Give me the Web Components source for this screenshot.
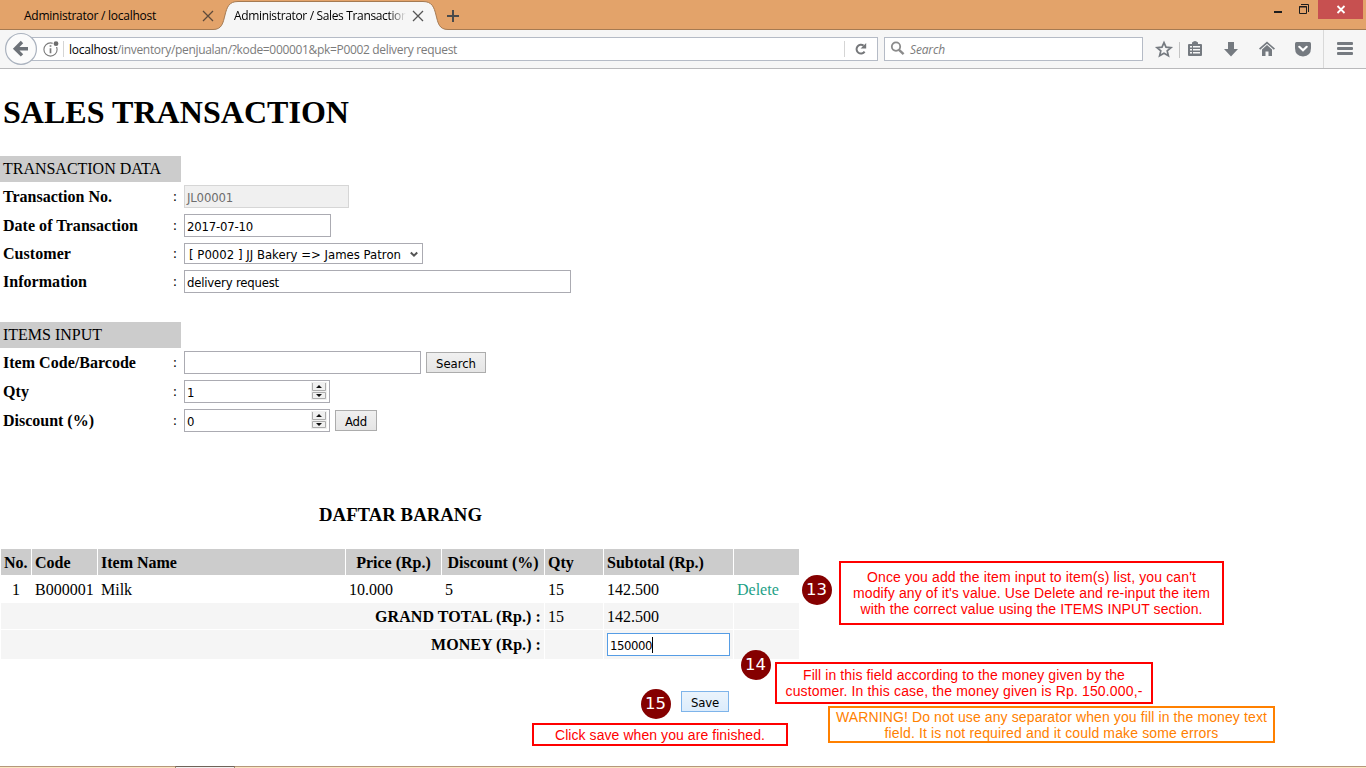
<!DOCTYPE html>
<html lang="en">
<head>
<meta charset="utf-8">
<title>Administrator / Sales Transaction</title>
<style>
html,body{margin:0;padding:0;background:#fff}
body{width:1366px;height:768px;overflow:hidden}
</style>
</head>
<body>
<sales-app></sales-app>
<script>
const define = (name, html, setup) => customElements.define(name, class extends HTMLElement {
  connectedCallback() {
    if (this.shadowRoot) return;
    const t = document.createElement('template');
    t.innerHTML = html;
    this.attachShadow({ mode: 'open' }).appendChild(document.importNode(t.content, true));
    if (setup) setup(this, this.shadowRoot);
  }
});

/* ---------- browser chrome ---------- */
define('tab-strip', `
<style>
:host{display:flex;height:30px;background:#e3a36a;box-shadow:inset 0 -1px #a57a52;font:12px "Open Sans",sans-serif;color:#000;position:relative}
.tab{display:flex;align-items:center;height:30px;box-sizing:border-box;padding:1px 0 0 24px;width:213px}
.tab.on{width:235px;padding-left:21px;position:relative}
.tab.on>svg.bg{position:absolute;left:0;top:0}
.tab.on fit-text,.tab.on svg.x{position:relative}
.title{position:relative;-webkit-mask-image:linear-gradient(90deg,#000 155px,transparent 172px)}
.x{margin-left:auto;display:block}
.plus{margin:10px 0 0 -1px;display:block}
.controls{margin-left:auto;display:flex;margin-right:3px}
</style>
<div class="tab"><fit-text w="132">Administrator / localhost</fit-text>
<svg class="x" style="margin-right:-1px" width="12" height="12"><path d="M1 1L11 11M11 1L1 11" stroke="#5e4a3a" stroke-width="1.3"/></svg></div>
<div class="tab on">
<svg class="bg" width="235" height="30"><path d="M0 30V29.5C9 29.5 10 23 12 15C14 7 16 1.5 25 1.5H210C219 1.5 221 7 223 15C225 23 226 29.5 235 29.5V30Z" fill="#f6f6f6"/><path d="M0 29.5C9 29.5 10 23 12 15C14 7 16 1.5 25 1.5H210C219 1.5 221 7 223 15C225 23 226 29.5 235 29.5" fill="none" stroke="#a57a52"/></svg>
<div class="title"><fit-text w="174">Administrator / Sales Transaction</fit-text></div>
<svg class="x" style="margin-right:24px" width="12" height="12"><path d="M1 1L11 11M11 1L1 11" stroke="#555" stroke-width="1.3"/></svg></div>
<svg class="plus" width="12" height="12"><path d="M6 0V12M0 6H12" stroke="#4b4b4b" stroke-width="2"/></svg>
<div class="controls">
<svg width="89" height="19"><path d="M0 11h8v2H0z" fill="#1d1d1d"/><path d="M25.5 6.500h7v7h-7zM25 7h8" fill="none" stroke="#1d1d1d"/><path d="M27 4.500H34.500V12" fill="none" stroke="#1d1d1d"/><rect x="44" width="45" height="19" fill="#c75050"/><path d="M63.500 6L70.500 13M70.500 6L63.500 13" stroke="#fff" stroke-width="1.8"/></svg>
</div>`);

define('nav-bar', `
<style>
:host{display:flex;height:39px;background:#f6f6f6;border-bottom:1px solid #b9b9bb;box-sizing:border-box;position:relative;font:12px "Open Sans",sans-serif;align-items:center}
.url{margin-left:20px;width:858px;height:24px;box-sizing:border-box;border:1px solid #b5bbc6;background:#fff;display:flex;align-items:center;color:#7b7b7b}
.url b{font-weight:400;color:#000}
.info{margin-left:21px}
.back{position:absolute;left:4px;top:2px}
.bar{width:1px;height:16px;background:#d5d5d5}
.search{margin-left:6px;width:259px;height:24px;box-sizing:border-box;border:1px solid #b5bbc6;background:#fff;display:flex;align-items:center;font-style:italic;color:#7b7b7b}
.icons{margin-left:auto}
svg{display:block}
</style>
<div class="url">
<svg class="info" width="18" height="18" fill="none"><circle cx="8.5" cy="9.5" r="6.6" stroke="#7a7a7a" stroke-width="1.1"/><circle cx="14" cy="3.7" r="3.4" fill="#fff"/><circle cx="14" cy="3.7" r="2.4" fill="#6d6d6d"/><path d="M8.5 5.2v1.6M8.5 8.2v5" stroke="#7a7a7a" stroke-width="1.7"/></svg>
<span class="bar" style="margin:0 5px 0 3px"></span><b><fit-text w="48">localhost</fit-text></b><fit-text w="340">/inventory/penjualan/?kode=000001&amp;pk=P0002 delivery request</fit-text>
<span class="bar" style="margin-left:auto;margin-right:9px"></span>
<svg width="14" height="14" style="margin-right:9px"><path d="M10.6 9.6A4.4 4.4 0 1 1 9.6 3.6" fill="none" stroke="#75777a" stroke-width="2"/><path d="M12.2 1v5.600H6.600z" fill="#75777a"/></svg>
</div>
<svg class="back" width="34" height="34"><circle cx="17" cy="16.9" r="15.4" fill="#fbfbfb" stroke="#aab2be" stroke-width="1.2"/><path d="M18 10L11.300 16.700L18 23.400M11.500 16.700H24" fill="none" stroke="#6d7278" stroke-width="3.4"/></svg>
<div class="search"><svg width="15" height="15" style="margin:0 5px 2px 5px"><circle cx="6" cy="5.6" r="4.2" fill="none" stroke="#8b8b8b" stroke-width="1.8"/><path d="M9 8.800L13.600 13.200" stroke="#8b8b8b" stroke-width="2.4"/></svg><fit-text w="35">Search</fit-text></div>
<svg class="icons" width="212" height="38" fill="#757a80">
<path d="M10 12.600l2 4.600 5 .4-3.800 3.300 1.200 4.900-4.400-2.600-4.400 2.600 1.200-4.900L3 17.600l5-.4z" fill="none" stroke="#757a80" stroke-width="1.7"/>
<path d="M25 12h1v16h-1z" fill="#c4c4c4"/>
<path d="M38 12.500q3-3 6 0v1.500h3q1 0 1 1V25q0 1-1 1H35q-1 0-1-1V15q0-1 1-1h3z"/><path d="M36 16h2v1.500h-2zM39 16h7v1.500h-7zM36 19h2v1.500h-2zM39 19h7v1.500h-7zM36 22h2v1.500h-2zM39 22h7v1.500h-7z" fill="#f6f6f6"/>
<path d="M74 12h6v7h4l-7 7.500-7-7.500h4z"/>
<path d="M113 11.500l8 7-1.200 1.200-6.800-6-6.800 6L105 18.500z"/><path d="M113 15l5 4.500V26h-3.500v-4.500h-3V26H108v-6.500z"/>
<path d="M142.500 12h13q1.500 0 1.500 1.500V18q0 8-8 8.500-8-.5-8-8.500v-4.500q0-1.500 1.500-1.500z"/><path d="M145.300 16.800l3.700 3.500 3.700-3.500" fill="none" stroke="#fff" stroke-width="2.200" stroke-linecap="round"/>
<path d="M169 0h1v38h-1z" fill="#d9d9d9"/>
<rect x="183" y="12" width="16" height="3" rx="1"/><rect x="183" y="17" width="16" height="3" rx="1"/><rect x="183" y="22" width="16" height="3" rx="1"/>
</svg>`);

/* ---------- form controls ---------- */
const control = 'font:13px "DejaVu Sans Condensed","DejaVu Sans",sans-serif;font-stretch:condensed;';
define('text-box', `
<style>
:host{display:flex;align-items:center;box-sizing:border-box;height:23px;border:1px solid #ababb2;background:#fff;color:#000;padding:1px 0 0 2px;${control}}
:host([disabled]){background:#f0f0f0;border-color:#d6d6d6;color:#6d6d6d}
:host([focused]){border-color:#569de5}
:host([focused])::after{content:"";width:1px;height:16px;background:#000}
svg{display:none;margin:-3px 2px 0 auto}
:host([number]) svg{display:block}
</style><slot></slot>
<svg width="16" height="18"><rect width="16" height="18" fill="#f0f0f0"/><path d="M1.500 1V8.500H14.500V1M1.500 16.500H14.500V10.500H1.500z" fill="none" stroke="#acacac"/><path d="M5 6L8 3L11 6zM5 12H11L8 15z" fill="#111"/></svg>`,
 h => h.style.width = h.getAttribute('w') + 'px');
define('select-box', `
<style>:host{display:flex;align-items:center;box-sizing:border-box;width:239px;height:21px;border:1px solid #ababb2;background:#fff;padding:1px 4px 0 4px;${control}}svg{margin:0 0 0 auto}</style>
<slot></slot><svg width="8" height="7"><path d="M.8 1.500L4 4.700L7.200 1.500" fill="none" stroke="#555" stroke-width="2"/></svg>`);
define('push-button', `
<style>:host{display:flex;align-items:center;justify-content:center;box-sizing:border-box;height:21px;border:1px solid #acacac;background:linear-gradient(#f0f0f0,#e5e5e5);padding-top:1px;${control}}
:host([primary]){border-color:#7eb4ea;background:linear-gradient(#ebf4fc,#dcecfc)}</style><slot></slot>`,
 h => h.style.width = h.getAttribute('w') + 'px');
define('field-row', `
<style>:host{display:grid;grid-template-columns:170px 11px auto;justify-content:start;align-items:center;height:29px;padding-left:3px;box-sizing:border-box}
:host([short]){height:27px}b{line-height:18px}.c{display:flex;align-items:center;gap:5px}i{font-style:normal;font-size:14px;padding-top:1px}</style>
<b><slot name="label"></slot></b><i>:</i><span class="c"><slot></slot></span>`);
define('section-band', `<style>:host{display:block;width:181px;height:26px;line-height:26px;padding-left:3px;box-sizing:border-box;background:#ccc}</style><slot></slot>`);

/* ---------- item list ---------- */
define('item-table', `
<style>
:host{display:grid;grid-template-columns:30px 65px 247px 95px 102px 58px 129px 65px;grid-template-rows:26px 26px 26px 29px;gap:1px;width:798px;margin-left:1px}
div{display:flex;align-items:center;padding:1px 3px 0;white-space:nowrap}
.h{background:#ccc;font-weight:700}.t{background:#f5f5f5}
.m{justify-content:center}.r{grid-column:1/6;justify-content:flex-end;font-weight:700}
.a{color:#1d9f87}.f{padding-top:0}
</style>
<div class="h">No.</div><div class="h">Code</div><div class="h">Item Name</div><div class="h m">Price (Rp.)</div><div class="h m">Discount (%)</div><div class="h">Qty</div><div class="h">Subtotal (Rp.)</div><div class="h"></div>
<div class="m">1</div><div>B000001</div><div>Milk</div><div>10.000</div><div>5</div><div>15</div><div>142.500</div><div class="a">Delete</div>
<div class="t r"><fit-text w="166">GRAND TOTAL (Rp.) :</fit-text></div><div class="t">15</div><div class="t">142.500</div><div class="t"></div>
<div class="t r"><fit-text w="110">MONEY (Rp.) :</fit-text></div><div class="t"></div><div class="t f"><text-box w="123" focused><fit-text w="42">150000</fit-text></text-box></div><div class="t"></div>`);

/* ---------- tutorial annotations, pinned over the page ---------- */
define('note-box', `
<style>:host{position:absolute;box-sizing:border-box;border:2px solid #f00;color:#f00;background:#fff;font:14px/16px "Liberation Sans",sans-serif;display:flex;flex-direction:column;align-items:center}
:host([warn]){border-color:#ff8000;color:#ff8000}</style><slot></slot>`,
 h => { const [x, y, w, hh, p] = h.getAttribute('at').split(' '); h.style.cssText = `left:${x}px;top:${y}px;width:${w}px;height:${hh}px;padding-top:${p}px`; });
define('step-badge', `
<style>:host{position:absolute;width:30px;height:30px;border-radius:50%;background:#850000;color:#fff;font:16.5px/29px "DejaVu Sans",sans-serif;text-align:center}</style><slot></slot>`,
 h => { const [x, y] = h.getAttribute('at').split(' '); h.style.left = x + 'px'; h.style.top = y + 'px'; });

define('sales-page', `
<style>
:host{display:block;height:697px;box-sizing:border-box;background:#fff;color:#000;font:16px "Liberation Serif",serif}
h1{margin:0;padding:25px 0 0 3px;height:62px;font-size:32px;line-height:37px}
h3{margin:0;width:801px;padding-top:69px;height:45px;font-size:18.72px;line-height:22px;text-align:center}
.gap{height:26px}
.save{display:flex;margin:32px 0 0 681px}
</style>
<h1><fit-text w="346">SALES TRANSACTION</fit-text></h1>
<section-band><fit-text w="158">TRANSACTION DATA</fit-text></section-band>
<field-row><fit-text slot="label" w="109">Transaction No.</fit-text><text-box w="165" disabled><fit-text w="46">JL00001</fit-text></text-box></field-row>
<field-row><fit-text slot="label" w="135">Date of Transaction</fit-text><text-box w="147"><fit-text w="66">2017-07-10</fit-text></text-box></field-row>
<field-row short><fit-text slot="label" w="68">Customer</fit-text><select-box><fit-text w="212">[ P0002 ] JJ Bakery =&gt; James Patron</fit-text></select-box></field-row>
<field-row><fit-text slot="label" w="84">Information</fit-text><text-box w="387"><fit-text w="92">delivery request</fit-text></text-box></field-row>
<div class="gap"></div>
<section-band><fit-text w="99">ITEMS INPUT</fit-text></section-band>
<field-row><fit-text slot="label" w="133">Item Code/Barcode</fit-text><text-box w="237"></text-box><push-button w="60"><fit-text w="40">Search</fit-text></push-button></field-row>
<field-row><fit-text slot="label" w="26">Qty</fit-text><text-box w="146" number><fit-text w="7">1</fit-text></text-box></field-row>
<field-row><fit-text slot="label" w="91">Discount (%)</fit-text><text-box w="146" number><fit-text w="7">0</fit-text></text-box><push-button w="42"><fit-text w="22">Add</fit-text></push-button></field-row>
<h3><fit-text w="163">DAFTAR BARANG</fit-text></h3>
<item-table></item-table>
<div class="save"><push-button w="48" primary><fit-text w="28">Save</fit-text></push-button></div>`);

define('task-edge', `<style>:host{display:flex;height:2px}i{box-sizing:border-box;height:2px;border-top:1px solid #b5977a;background:#fbe6c2;width:175px}i:nth-of-type(2){width:60px;border-top-color:#6f6259;background:#f3f0ee;border-left:1px solid #a58a70;border-right:1px solid #a58a70}i:last-child{flex:1}</style><i></i><i></i><i></i>`);

define('sales-app', `
<style>:host{display:block;position:relative;width:1366px;height:768px;overflow:hidden}</style>
<tab-strip></tab-strip><nav-bar></nav-bar><sales-page></sales-page><task-edge></task-edge>
<step-badge at="801.5 574.5">13</step-badge><step-badge at="740.5 649.5">14</step-badge><step-badge at="640.5 688.5">15</step-badge>
<note-box at="839 561 385 64 6"><fit-text w="329">Once you add the item input to item(s) list, you can't</fit-text><fit-text w="357">modify any of it's value. Use Delete and re-input the item</fit-text><fit-text w="342">with the correct value using the ITEMS INPUT section.</fit-text></note-box>
<note-box at="775 662 378 42 3"><fit-text w="322">Fill in this field according to the money given by the</fit-text><fit-text w="357">customer. In this case, the money given is Rp. 150.000,-</fit-text></note-box>
<note-box warn at="828 706 447 37 1"><fit-text w="431">WARNING! Do not use any separator when you fill in the money text</fit-text><fit-text w="334">field. It is not required and it could make some errors</fit-text></note-box>
<note-box at="532 723 256 23 2"><fit-text w="210">Click save when you are finished.</fit-text></note-box>`);

/* Tracks its text so that the run takes exactly the width given in "w". */
define('fit-text', `<style>:host{display:inline-block;white-space:nowrap}span{display:inline-block}</style><span><slot></slot></span>`,
 (h, root) => {
   const span = root.querySelector('span'), w = +h.getAttribute('w');
   const natural = span.getBoundingClientRect().width;
   span.style.letterSpacing = (w - natural) / h.textContent.length + 'px';
 });
</script>
</body>
</html>
